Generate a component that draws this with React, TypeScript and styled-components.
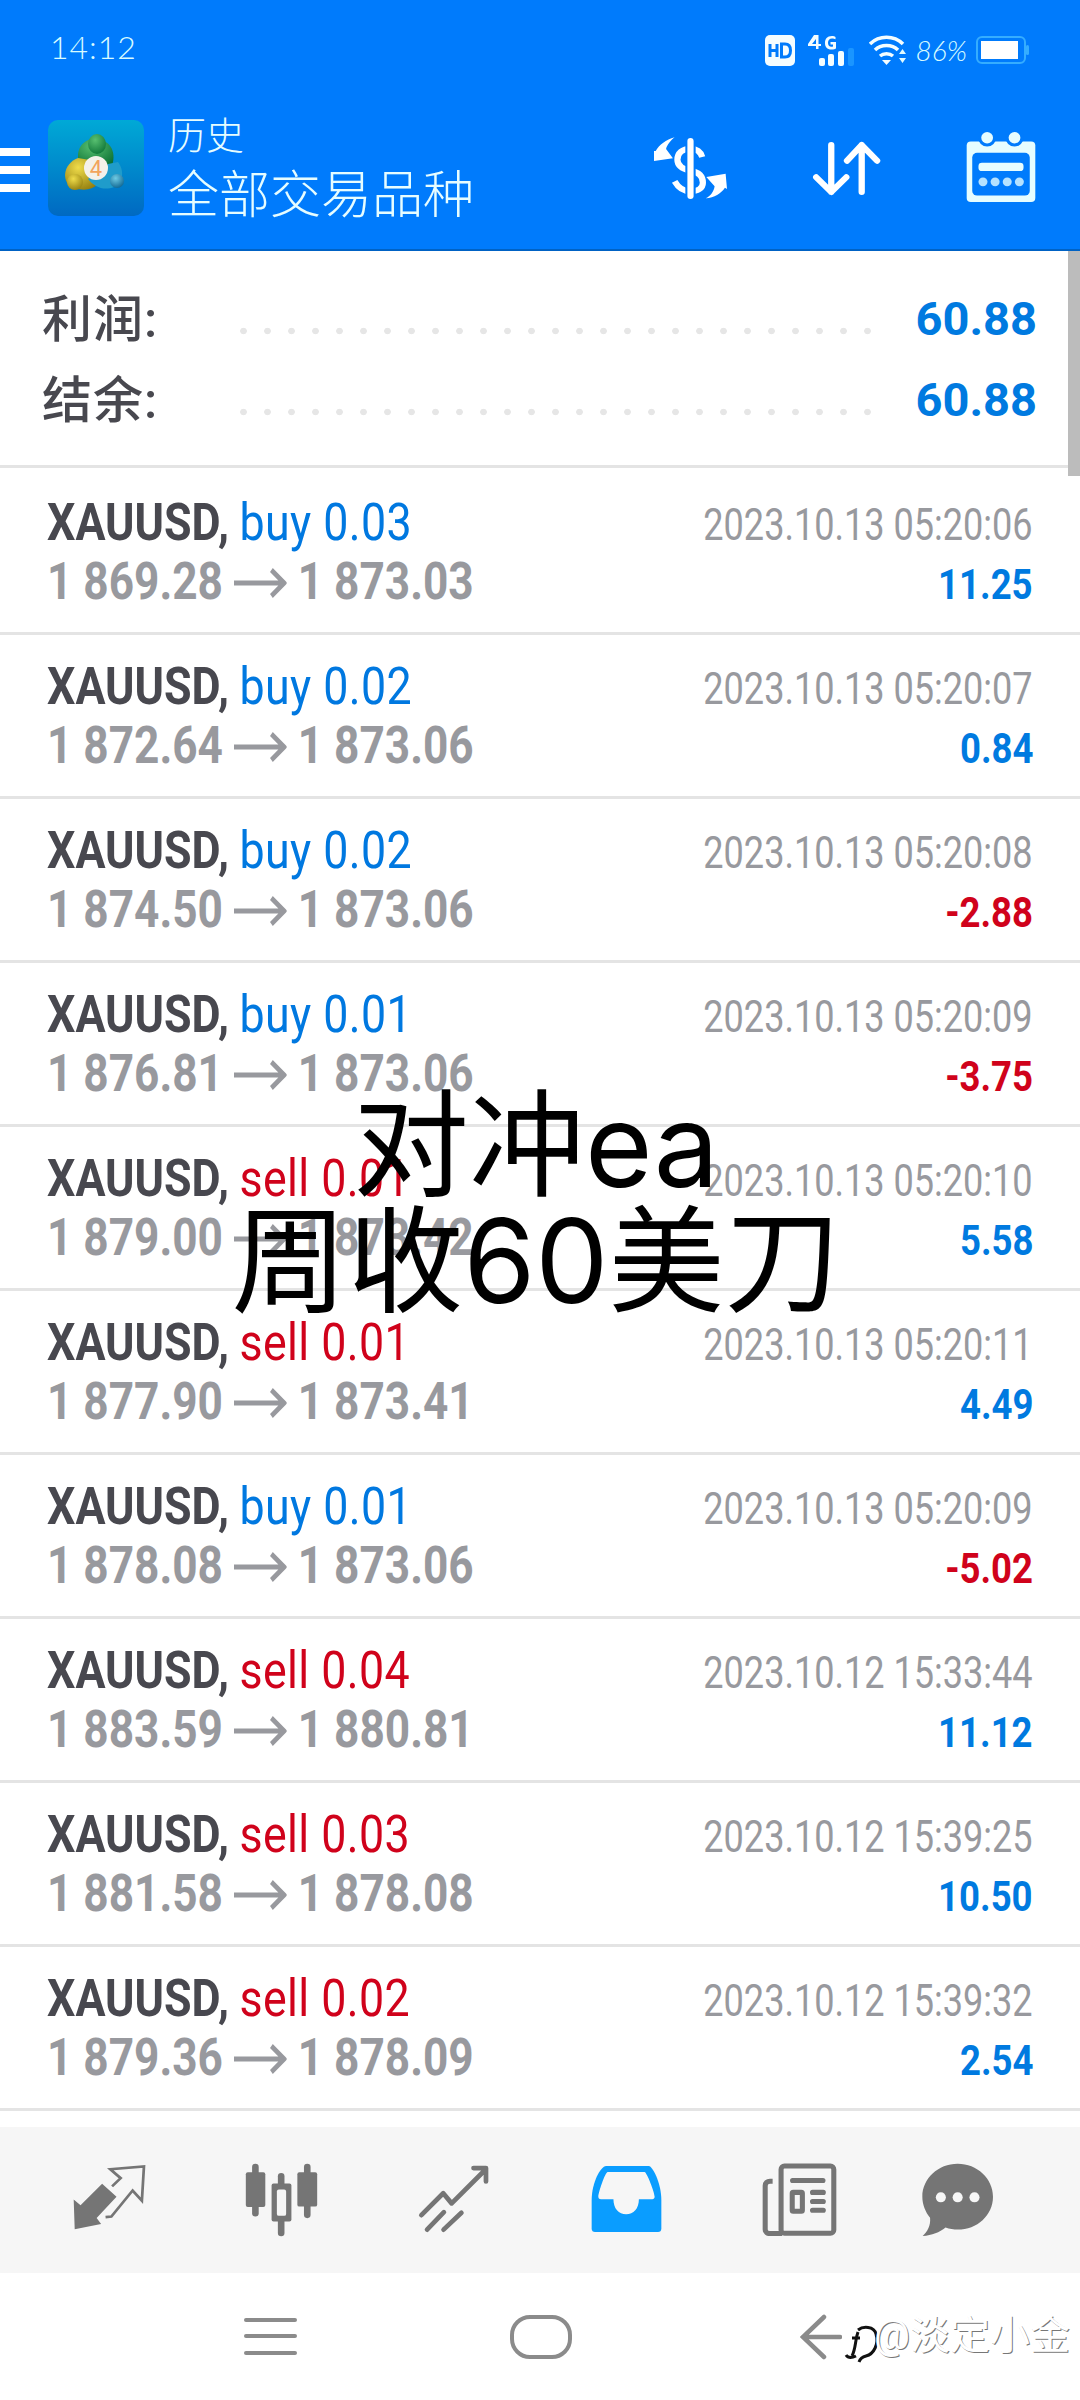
import React from "react";
import styled, { createGlobalStyle } from "styled-components";

const GlobalStyle = createGlobalStyle`
	html, body {
		margin: 0;
		padding: 0;
		background: #fff;
	}
	#root {
		width: 1080px;
		height: 2400px;
	}
`;

const CJK = `Roboto, "Noto Sans CJK SC", sans-serif`;

const Page = styled.div`
	position: relative;
	width: 1080px;
	height: 2400px;
	display: flex;
	flex-direction: column;
	overflow: hidden;
	background: #fff;
	font-family: ${CJK};
`;

const Header = styled.header`
	height: 249px;
	background: #007bfc;
	border-bottom: 2px solid #0062c4;
	display: flex;
	flex-direction: column;
	color: #e6fdff;
`;

const StatusBar = styled.div`
	height: 100px;
	box-sizing: border-box;
	padding: 29px 50px 0 50px;
	display: flex;
	align-items: flex-start;
	justify-content: space-between;
`;

const Clock = styled.span`
	font-family: Lato, sans-serif;
	font-weight: 300;
	font-size: 32px;
	line-height: 36px;
	letter-spacing: 1px;
	color: #d8fbff;
`;

const StatusIcons = styled.div`
	display: flex;
	align-items: center;
	height: 34px;
	margin-top: 4px;
	gap: 0;
`;

const Percent = styled.span`
	font-family: Lato, sans-serif;
	font-style: italic;
	font-weight: 300;
	font-size: 28px;
	line-height: 34px;
	color: #d8fbff;
	margin: 0 9px 0 9px;
`;

const Toolbar = styled.div`
	flex: 1;
	display: flex;
	align-items: flex-start;
`;

const Burger = styled.div`
	width: 30px;
	height: 44px;
	margin-top: 48px;
	display: flex;
	flex-direction: column;
	justify-content: space-between;
`;

const BurgerBar = styled.i`
	display: block;
	height: 8px;
	background: #fff;
`;

const AppIcon = styled.div`
	width: 96px;
	height: 96px;
	margin: 20px 26px 0 18px;
	border-radius: 10px;
	overflow: hidden;
	flex: none;
`;

const Titles = styled.div`
	flex: 1;
	display: flex;
	flex-direction: column;
	margin-left: -2px;
`;

const SubTitle = styled.div`
	font-size: 38px;
	line-height: 44px;
	margin-top: 14px;
	font-weight: 300;
`;

const Title = styled.div`
	font-size: 51px;
	line-height: 60px;
	margin-top: 8px;
	font-weight: 300;
`;

const ToolIcon = styled.div<{ $w: number; $h: number; $top: number; $right: number }>`
	width: ${(p) => p.$w}px;
	height: ${(p) => p.$h}px;
	margin-top: ${(p) => p.$top}px;
	margin-right: ${(p) => p.$right}px;
	flex: none;
	svg {
		display: block;
		width: 100%;
		height: 100%;
	}
`;

const List = styled.main`
	flex: 1;
	position: relative;
	overflow: hidden;
`;

const ScrollThumb = styled.div`
	position: absolute;
	top: 0;
	right: 0;
	width: 12px;
	height: 225px;
	background: #bcbcbc;
`;

const Summary = styled.section`
	height: 217px;
	box-sizing: border-box;
	margin-bottom: 3px;
	padding: 27px 43px 0 42px;
	border-bottom: 3px solid #e4e4e4;
`;

const SummaryRow = styled.div`
	height: 81px;
	display: flex;
	align-items: center;
`;

const SummaryLabel = styled.span`
	width: 198px;
	flex: none;
	margin-top: -8px;
	font-size: 50px;
	font-weight: 500;
	color: #48484f;
	letter-spacing: 1px;
`;

const Dots = styled.span`
	width: 648px;
	height: 8px;
	margin-top: 24px;
	background-image: radial-gradient(circle at 3.5px 4px, #e6e6e6 3px, transparent 3.6px);
	background-size: 24px 8px;
	background-repeat: repeat-x;
`;

const SummaryValue = styled.span`
	flex: 1;
	text-align: right;
	font-size: 47px;
	font-weight: 700;
	color: #007ae0;
`;

const Deal = styled.div`
	height: 161px;
	border-bottom: 3px solid #e4e4e4;
	box-sizing: content-box;
	padding: 0 47px 0 47px;
	display: flex;
	flex-direction: column;
	justify-content: center;
`;

const Line = styled.div`
	height: 59px;
	line-height: 59px;
	display: flex;
	justify-content: space-between;
	align-items: baseline;
`;

const Narrow = styled.span<{ $end?: boolean; $scale?: number }>`
	display: inline-block;
	white-space: nowrap;
	transform: scaleX(${(p) => p.$scale ?? 0.85});
	transform-origin: ${(p) => (p.$end ? "right" : "left")} center;
`;

const Symbol = styled.span`
	font-size: 52px;
	font-weight: 700;
	color: #48484f;
`;

const Side = styled.span<{ $sell: boolean }>`
	font-size: 52px;
	margin-left: 8px;
	letter-spacing: 0.5px;
	color: ${(p) => (p.$sell ? "#d0021b" : "#0078e0")};
`;

const Prices = styled.span`
	font-size: 52px;
	font-weight: 700;
	color: #98999e;
`;

const Arrow = styled.svg`
	display: inline-block;
	width: 62px;
	height: 32px;
	margin: 0 13px;
`;

const Time = styled.span`
	font-size: 44px;
	color: #98999e;
`;

const Profit = styled.span<{ $loss: boolean }>`
	font-size: 42px;
	font-weight: 700;
	color: ${(p) => (p.$loss ? "#d0021b" : "#007ae0")};
`;

const TabBar = styled.nav`
	height: 146px;
	flex: none;
	background: #f6f6f6;
	display: flex;
	align-items: flex-start;
`;

const TabIcon = styled.svg<{ $w: number; $h: number; $top: number; $left: number }>`
	display: block;
	flex: none;
	width: ${(p) => p.$w}px;
	height: ${(p) => p.$h}px;
	margin-top: ${(p) => p.$top}px;
	margin-left: ${(p) => p.$left}px;
`;

const NavBar = styled.div`
	height: 127px;
	flex: none;
	background: #fff;
	display: flex;
	align-items: flex-start;
`;

const Credit = styled.span`
	position: absolute;
	right: 10px;
	bottom: 42px;
	font-size: 40px;
	line-height: 44px;
	color: #fff;
	text-shadow: 1px 1px 0 #777;
`;

const Caption = styled.div`
	position: absolute;
	top: 1087px;
	left: 0;
	width: 1072px;
	text-align: center;
	font-size: 116px;
	line-height: 116px;
	color: #000;
	font-family: Inter, "Noto Sans CJK SC", sans-serif;
	font-weight: 400;
`;

type DealRow = {
	side: string;
	lots: string;
	from: string;
	to: string;
	time: string;
	profit: string;
};

const deals: DealRow[] = [
	{ side: "buy", lots: "0.03", from: "1 869.28", to: "1 873.03", time: "2023.10.13 05:20:06", profit: "11.25" },
	{ side: "buy", lots: "0.02", from: "1 872.64", to: "1 873.06", time: "2023.10.13 05:20:07", profit: "0.84" },
	{ side: "buy", lots: "0.02", from: "1 874.50", to: "1 873.06", time: "2023.10.13 05:20:08", profit: "-2.88" },
	{ side: "buy", lots: "0.01", from: "1 876.81", to: "1 873.06", time: "2023.10.13 05:20:09", profit: "-3.75" },
	{ side: "sell", lots: "0.01", from: "1 879.00", to: "1 873.42", time: "2023.10.13 05:20:10", profit: "5.58" },
	{ side: "sell", lots: "0.01", from: "1 877.90", to: "1 873.41", time: "2023.10.13 05:20:11", profit: "4.49" },
	{ side: "buy", lots: "0.01", from: "1 878.08", to: "1 873.06", time: "2023.10.13 05:20:09", profit: "-5.02" },
	{ side: "sell", lots: "0.04", from: "1 883.59", to: "1 880.81", time: "2023.10.12 15:33:44", profit: "11.12" },
	{ side: "sell", lots: "0.03", from: "1 881.58", to: "1 878.08", time: "2023.10.12 15:39:25", profit: "10.50" },
	{ side: "sell", lots: "0.02", from: "1 879.36", to: "1 878.09", time: "2023.10.12 15:39:32", profit: "2.54" },
];

function HdBadge() {
	return (
		<svg width="30" height="31" viewBox="0 0 30 31" style={{ marginRight: 12 }}>
			<rect width="30" height="31" rx="5" fill="#f4fdff" />
			<path d="M5 9v13M12 9v13M5 15.5h7" stroke="#007bfc" strokeWidth="3" fill="none" />
			<path d="M16.5 9v13h3.5c4 0 5.5-2.5 5.5-6.5S24 9 20 9z" stroke="#007bfc" strokeWidth="3" fill="none" />
		</svg>
	);
}

function Signal() {
	return (
		<svg width="48" height="32" viewBox="0 0 48 32" style={{ marginRight: 14 }}>
			<path d="M7 1 1 10v2h8v3h2.5v-3H14V10h-2.5V1zM9 5v5H5z" fill="#f4fdff" fillRule="evenodd" />
			<path d="M25 2c-5 0-7 3-7 7s2 6.500 6.500 6.500c2 0 4-.5 4.500-1V8h-5.500v2.500H26v2c-3 .8-5-.5-5-3.500 0-3 1.500-4.500 4-4.500 1.500 0 2.500.3 3.500.8V3c-1-.7-2-1-3.500-1z" fill="#f4fdff" />
			<rect x="12" y="24" width="6" height="8" rx="2" fill="#f4fdff" />
			<rect x="21" y="20" width="6" height="12" rx="2" fill="#f4fdff" />
			<rect x="31" y="17" width="6" height="15" rx="2" fill="#f4fdff" />
			<rect x="41" y="14" width="6" height="18" rx="2" fill="#1a95ff" />
		</svg>
	);
}

function Wifi() {
	return (
		<svg width="38" height="30" viewBox="0 0 38 30">
			<path d="M1 9C10 0 25 0 34 9M6 15c6-6 17-6 23 0M11 21c3.500-3 9.500-3 13 0" stroke="#f4fdff" strokeWidth="3.500" fill="none" />
			<path d="M13 25h9l-4.500 5z" fill="#f4fdff" />
			<path d="M30 19h7l-3.500-5zM30 23h7l-3.500 5z" fill="#e0fbff" />
		</svg>
	);
}

function Battery() {
	return (
		<svg width="54" height="28" viewBox="0 0 54 28">
			<rect x="1" y="1" width="48" height="26" rx="5" fill="none" stroke="#35adff" strokeWidth="2" />
			<rect x="5" y="5" width="37" height="18" fill="#fff" />
			<rect x="50" y="9" width="3" height="10" rx="1.500" fill="#35adff" />
		</svg>
	);
}

function Mt4Logo() {
	return (
		<svg width="96" height="96" viewBox="0 0 96 96">
			<defs>
				<linearGradient id="mt4bg" x1="0" y1="0" x2="0" y2="1">
					<stop offset="0" stopColor="#00a9d6" />
					<stop offset="1" stopColor="#0069c2" />
				</linearGradient>
				<radialGradient id="mt4g" cx="0.4" cy="0.3" r="0.8">
					<stop offset="0" stopColor="#58c070" />
					<stop offset="1" stopColor="#0a7034" />
				</radialGradient>
				<radialGradient id="mt4y" cx="0.4" cy="0.3" r="0.8">
					<stop offset="0" stopColor="#efdc4a" />
					<stop offset="1" stopColor="#8f7a0c" />
				</radialGradient>
				<radialGradient id="mt4b" cx="0.4" cy="0.3" r="0.8">
					<stop offset="0" stopColor="#6fcbe4" />
					<stop offset="1" stopColor="#085f8c" />
				</radialGradient>
			</defs>
			<rect width="96" height="96" fill="url(#mt4bg)" />
			<path d="M32 46C26 30 34 20 47 18c14 2 22 12 17 28z" fill="url(#mt4g)" />
			<ellipse cx="49" cy="24" rx="9" ry="10" fill="url(#mt4g)" />
			<path d="M30 38C14 44 13 64 26 68c10 3 18 2 24-4L42 40z" fill="url(#mt4y)" />
			<circle cx="27" cy="62" r="8" fill="url(#mt4y)" />
			<path d="M70 42c6 8 6 20-4 25-10 4-20 0-26-8l20-15z" fill="#1f9ccb" />
			<circle cx="69" cy="61" r="7" fill="url(#mt4b)" />
			<circle cx="48" cy="48" r="12" fill="#f4f1ea" />
			<text x="48" y="56" textAnchor="middle" fontFamily="Roboto, sans-serif" fontSize="22" fill="#f2a45c">
				4
			</text>
		</svg>
	);
}

export default function App() {
	return (
		<Page>
			<GlobalStyle />
			<Header>
				<StatusBar>
					<Clock>14:12</Clock>
					<StatusIcons>
						<HdBadge />
						<Signal />
						<Wifi />
						<Percent>86%</Percent>
						<Battery />
					</StatusIcons>
				</StatusBar>
				<Toolbar>
					<Burger>
						<BurgerBar />
						<BurgerBar />
						<BurgerBar />
					</Burger>
					<AppIcon>
						<Mt4Logo />
					</AppIcon>
					<Titles>
						<SubTitle>历史</SubTitle>
						<Title>全部交易品种</Title>
					</Titles>
					<ToolIcon $w={73} $h={62} $top={37} $right={85}>
						<svg viewBox="330 410 212 186" preserveAspectRatio="none">
							<path d="M470 470c-5-18-18-25-34-25-24 0-38 14-38 33 0 22 20 29 38 33 22 4 36 14 36 36 0 17-16 26-36 26-20 0-36-12-46-30" fill="none" stroke="#fff" strokeWidth="18" />
							<path d="M436 421v166" stroke="#007bfc" strokeWidth="30" />
							<path d="M436 422v165" stroke="#fff" strokeWidth="18" strokeLinecap="round" />
							<path d="M390 415c-10 8-22 22-25 35l20 28-55 8-1-30 6 0c10-18 30-34 55-41z" fill="#fff" transform="translate(0 -4)" />
							<path d="M480 594c14-6 24-20 26-36l-24-28 56-10 4 46-6-4c-12 18-30 30-56 32z" fill="#fff" />
						</svg>
					</ToolIcon>
					<ToolIcon $w={70} $h={56} $top={41} $right={84}>
						<svg viewBox="790 420 200 170" preserveAspectRatio="none" fill="none" stroke="#fff" strokeWidth="18" strokeLinecap="round" strokeLinejoin="round">
							<path d="M845 432v143M802 530l43 45 43-45" />
							<path d="M932 575V432M890 480l42-48 44 48" />
						</svg>
					</ToolIcon>
					<ToolIcon $w={70} $h={70} $top={32} $right={44}>
						<svg viewBox="1236 396 202 208" preserveAspectRatio="none">
							<rect x="1238" y="424" width="198" height="180" rx="12" fill="#e6fdff" />
							<circle cx="1297" cy="413" r="26" fill="#007bfc" />
							<circle cx="1376" cy="413" r="26" fill="#007bfc" />
							<circle cx="1297" cy="413" r="17" fill="#e6fdff" />
							<circle cx="1376" cy="413" r="17" fill="#e6fdff" />
							<rect x="1254" y="458" width="166" height="127" rx="14" fill="#007bfc" />
							<rect x="1272" y="487" width="130" height="25" rx="10" fill="#e6fdff" />
							<circle cx="1285" cy="544" r="13" fill="#b5e2ff" />
							<circle cx="1320" cy="544" r="13" fill="#b5e2ff" />
							<circle cx="1355" cy="544" r="13" fill="#b5e2ff" />
							<circle cx="1390" cy="544" r="13" fill="#b5e2ff" />
						</svg>
					</ToolIcon>
				</Toolbar>
			</Header>

			<List>
				<ScrollThumb />
				<Summary>
					<SummaryRow>
						<SummaryLabel>利润:</SummaryLabel>
						<Dots />
						<SummaryValue>60.88</SummaryValue>
					</SummaryRow>
					<SummaryRow>
						<SummaryLabel>结余:</SummaryLabel>
						<Dots />
						<SummaryValue>60.88</SummaryValue>
					</SummaryRow>
				</Summary>
				{deals.map((d) => (
					<Deal key={d.time + d.from}>
						<Line>
							<Narrow $scale={0.86}>
								<Symbol>XAUUSD,</Symbol>{" "}
								<Side $sell={d.side === "sell"}>
									{d.side} {d.lots}
								</Side>
							</Narrow>
							<Narrow $end $scale={0.82}>
								<Time>{d.time}</Time>
							</Narrow>
						</Line>
						<Line>
							<Narrow $scale={0.85}>
								<Prices>{d.from}</Prices>
								<Arrow viewBox="0 0 62 32" fill="none" stroke="#98999e" strokeWidth="5">
									<path d="M0 16h58M44 3l15 13-15 13" />
								</Arrow>
								<Prices>{d.to}</Prices>
							</Narrow>
							<Narrow $end $scale={0.87}>
								<Profit $loss={d.profit.startsWith("-")}>{d.profit}</Profit>
							</Narrow>
						</Line>
					</Deal>
				))}
			</List>

			<TabBar>
				<TabIcon $w={73} $h={66} $top={37} $left={73} viewBox="213 205 213 192" fill="#757575">
					<path d="M215 308l20 17 63-63 42 38-58 62 13 18-77 15z" />
					<path d="M327 270l25-24-30-26 98-8-6 100-27-30-62 76-17 2" fill="none" stroke="#757575" strokeWidth="8" />
				</TabIcon>
				<TabIcon $w={75} $h={74} $top={36} $left={98} viewBox="708 188 220 224" fill="#757575">
					<rect x="729" y="190" width="20" height="160" rx="10" />
					<rect x="710" y="216" width="59" height="105" rx="6" />
					<rect x="807" y="218" width="20" height="192" rx="10" />
					<rect x="788" y="250" width="60" height="115" rx="6" />
					<rect x="804" y="268" width="28" height="80" rx="6" fill="#f6f6f6" />
					<rect x="886" y="190" width="20" height="165" rx="10" />
					<rect x="866" y="216" width="60" height="104" rx="6" />
				</TabIcon>
				<TabIcon $w={72} $h={68} $top={38} $left={99} viewBox="1212 196 210 202" fill="none" stroke="#757575" strokeWidth="14" strokeLinecap="round" strokeLinejoin="round">
					<path d="M1220 345l65-65 25 30 100-100M1375 205h37v40" />
					<path d="M1237 388l50-52M1286 388l53-50" />
				</TabIcon>
				<TabIcon $w={73} $h={66} $top={39} $left={100} viewBox="147 198 208 197" fill="#0a9dff">
					<path d="M190 198h128c10 0 37 50 37 102v85c0 6-4 10-10 10H157c-6 0-10-4-10-10v-85c0-52 27-102 43-102z" />
					<path d="M195 216h110c6 0 30 60 30 74 0 5-3 7-7 7h-40c0 28-16 45-38 45s-38-17-38-45h-37c-6 0-8-3-8-7 0-10 20-74 28-74z" fill="#f6f6f6" />
				</TabIcon>
				<TabIcon $w={76} $h={73} $top={36} $left={99} viewBox="645 188 220 216" fill="none" stroke="#757575" strokeWidth="15">
					<rect x="699" y="197" width="156" height="199" rx="10" />
					<path d="M674 242h-8c-8 0-14 5-14 13v130c0 8 6 12 14 12h36" />
					<path d="M733 240h90M792 275h32M792 302h32M792 328h32" strokeLinecap="round" strokeWidth="15" />
					<rect x="732" y="275" width="30" height="56" rx="3" strokeWidth="15" />
				</TabIcon>
				<TabIcon $w={72} $h={73} $top={36} $left={84} viewBox="1108 188 212 217" fill="#757575">
					<path d="M1213 190c58 0 105 44 105 98 0 55-47 98-105 98-12 0-24-2-36-6-18 14-40 24-68 25 14-12 24-30 22-54-14-18-23-40-23-63 0-54 47-98 105-98z" />
					<circle cx="1163" cy="290" r="15" fill="#f6f6f6" />
					<circle cx="1213" cy="290" r="15" fill="#f6f6f6" />
					<circle cx="1263" cy="290" r="15" fill="#f6f6f6" />
				</TabIcon>
			</TabBar>

			<NavBar>
				<TabIcon $w={53} $h={37} $top={45} $left={244} viewBox="0 0 53 37" fill="#8b8b8b">
					<rect y="0" width="53" height="4" rx="2" />
					<rect y="16" width="53" height="4" rx="2" />
					<rect y="33" width="53" height="4" rx="2" />
				</TabIcon>
				<TabIcon $w={62} $h={44} $top={42} $left={213} viewBox="0 0 62 44" fill="none" stroke="#8b8b8b" strokeWidth="4">
					<rect x="2" y="2" width="58" height="40" rx="18" />
				</TabIcon>
				<TabIcon $w={42} $h={46} $top={41} $left={228} viewBox="0 0 42 46" fill="none" stroke="#8b8b8b" strokeWidth="4.500" strokeLinecap="round">
					<path d="M24 3L3 23l21 20M3 23h37" />
				</TabIcon>
				<TabIcon $w={36} $h={40} $top={51} $left={2} viewBox="0 0 36 40" fill="none" stroke="#111" strokeWidth="3">
					<path d="M12 32C8 34 4 34 2 31M14 6c5-4 16-4 18 4 3 10-2 20-10 22-4 1-6 3-7 6M16 14h-8M14 8c-3 8-2 16-6 24" />
				</TabIcon>
			</NavBar>
			<Credit>@淡定小金</Credit>

			<Caption>
				对冲ea
				<br />
				周收60美刀
			</Caption>
		</Page>
	);
}
